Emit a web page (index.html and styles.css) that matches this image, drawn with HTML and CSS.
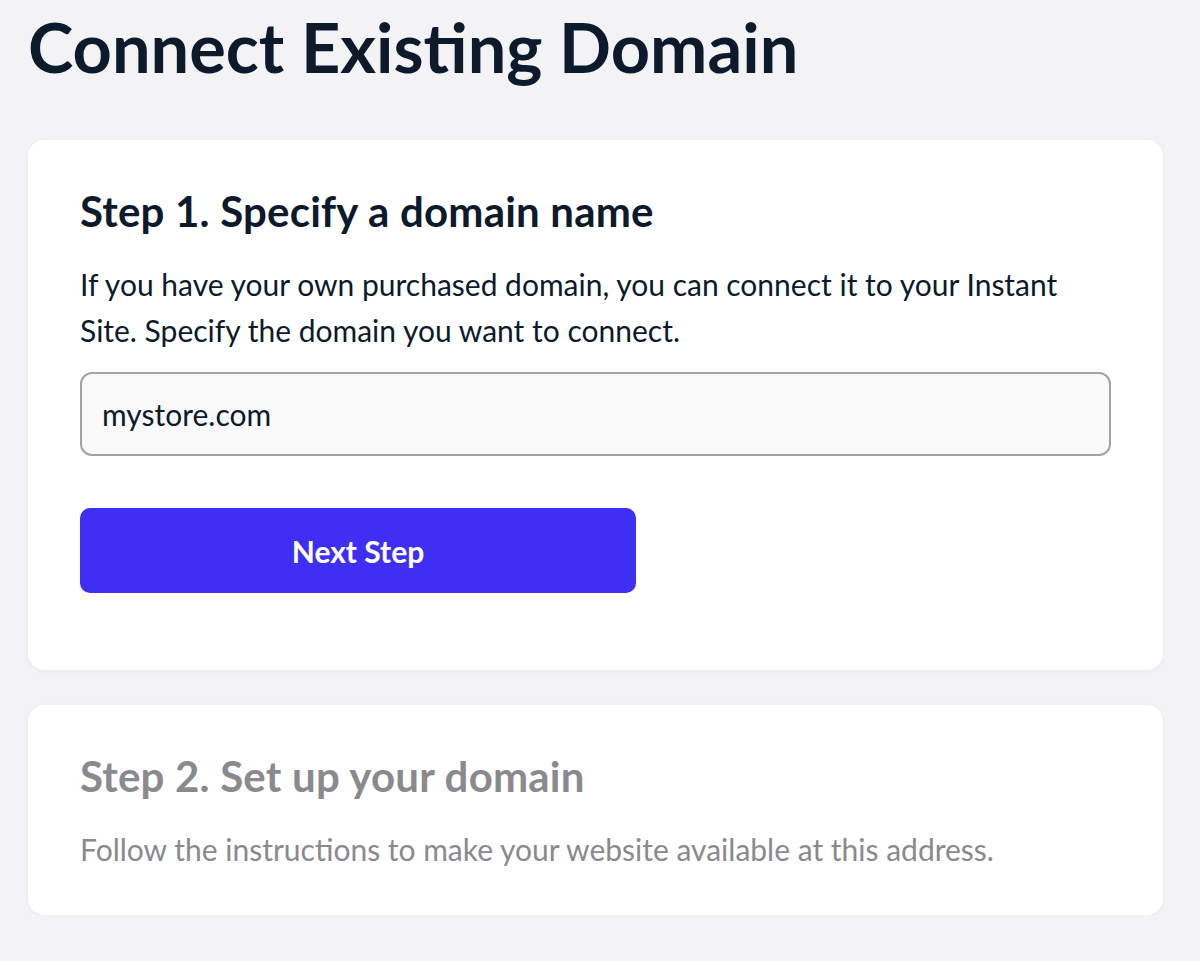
FILE: index.html
```html
<!DOCTYPE html>
<html lang="en">
<head>
    <meta charset="UTF-8">
    <meta name="viewport" content="width=device-width, initial-scale=1.0">
    <title>Connect Existing Domain</title>
    <link rel="stylesheet" href="styles.css">
</head>
<body>
<div class="page">
    <h1 class="page-title">Connect Existing Domain</h1>

    <div class="card">
        <h2 class="step-title">Step 1. Specify a domain name</h2>
        <p class="step-text">If you have your own purchased domain, you can connect it to your Instant Site. Specify the domain you want to connect.</p>
        <input class="domain-input" type="text" value="mystore.com">
        <button class="next-btn" type="button">Next Step</button>
    </div>

    <div class="card disabled">
        <h2 class="step-title">Step 2. Set up your domain</h2>
        <p class="step-text">Follow the instructions to make your website available at this address.</p>
    </div>
</div>
</body>
</html>
```
FILE: styles.css
```css
*{
    padding: 0;
    margin: 0;
    box-sizing: border-box;
}
html, body{
    background: #f3f2f5;
}
body{
    font-family: Lato, "Open Sans", sans-serif;
    color: #0c1a2c;
}
.page{
    padding: 6px 37px 0 28px;
    display: flex;
    flex-direction: column;
    gap: 35px;
}
.page-title{
    font-size: 68.5px;
    font-weight: bold;
    line-height: 82px;
    margin-bottom: 17px;
}
.card{
    background: #fff;
    border-radius: 16px;
    box-shadow: 0 1px 4px rgba(0,0,0,.06);
    padding: 48px 52px 77px;
    display: flex;
    flex-direction: column;
    align-items: flex-start;
}
.step-title{
    font-size: 42px;
    font-weight: bold;
    line-height: 46px;
    letter-spacing: 0.2px;
}
.step-text{
    font-size: 30px;
    line-height: 46px;
    margin-top: 27px;
    color: #0c1a2c;
}
.domain-input{
    width: 100%;
    height: 84px;
    margin-top: 19px;
    border: 2px solid #a3a3a6;
    border-radius: 12px;
    background: #f9f9f9;
    padding: 0 20px;
    font-family: inherit;
    font-size: 30px;
    color: #0c1a2c;
    outline: none;
}
.next-btn{
    width: 556px;
    height: 85px;
    margin-top: 52px;
    border: 0;
    border-radius: 10px;
    background: #3f2ff4;
    color: #fff;
    font-family: inherit;
    font-size: 30px;
    font-weight: bold;
}
.disabled{
    padding-bottom: 43px;
}
.disabled .step-title,
.disabled .step-text{
    color: #8a898e;
}
```
